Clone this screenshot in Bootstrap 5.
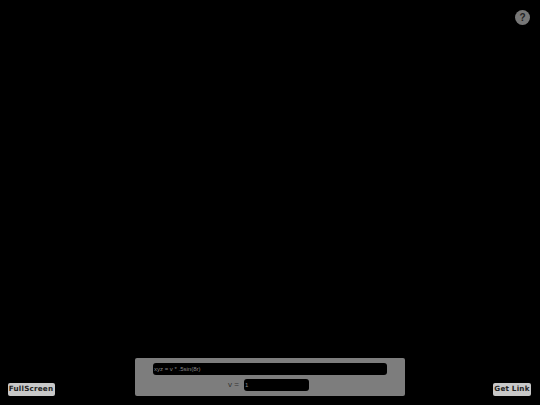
<!DOCTYPE html>
<html lang="en">
<head>
<meta charset="utf-8">
<title>Parametric surface</title>
<link rel="stylesheet" href="https://cdn.jsdelivr.net/npm/bootstrap@5.3.0/dist/css/bootstrap.min.css">
<style>
html,body{height:405px;overflow:hidden;background:#000;}
body{font-family:"Liberation Sans",Arial,sans-serif;}
.stage{height:405px;padding:9.5px 7.5px 9px 7.5px;}
.help-dot{width:15px;height:15px;border-radius:50%;background:#777;color:#222;font:bold 10px/15px "Liberation Sans",Arial,sans-serif;text-align:center;margin-right:2.5px;}
.dock{grid-template-columns:1fr 270px 1fr;align-items:end;}
.link-btn{font:bold 7.2px/12.5px "DejaVu Sans",sans-serif;letter-spacing:.2px;white-space:nowrap;height:13px;padding:0;background:#c8c8c8;color:#222;border:0;border-radius:2px;--bs-btn-hover-bg:#c8c8c8;}
.fs-btn{width:47px;}
.get-btn{width:38px;margin-right:1.5px;}
.formula-panel{background:#7d7d7d;border-radius:2px;height:38px;padding:5px 18px 5px;color:#333;}
.expr-field,.num-field{background:#000;color:#888;border:0;border-radius:3px;font:6px/11.5px "Liberation Sans",Arial,sans-serif;height:11.5px;padding:0 1px;outline:0;display:block;}
.expr-field{width:234px;}
.num-field{width:65px;}
.var-row{margin-top:4.5px;margin-right:3px;}
.var-name{font:8px/11px "Liberation Sans",Arial,sans-serif;width:16px;color:#333;}
</style>
</head>
<body>
<div class="stage d-flex flex-column justify-content-between">
  <div class="d-flex justify-content-end">
    <div class="help-dot">?</div>
  </div>
  <div class="dock d-grid">
    <div class="d-flex justify-content-start"><button type="button" class="btn link-btn fs-btn">FullScreen</button></div>
    <div class="formula-panel">
      <input class="expr-field" type="text" value="xyz = v * .5sin(8r)" aria-label="Expression">
      <div class="var-row d-flex justify-content-center align-items-center">
        <span class="var-name">v =</span>
        <input class="num-field" type="text" value="1" aria-label="v">
      </div>
    </div>
    <div class="d-flex justify-content-end"><button type="button" class="btn link-btn get-btn">Get Link</button></div>
  </div>
</div>
<script src="https://cdn.jsdelivr.net/npm/bootstrap@5.3.0/dist/js/bootstrap.bundle.min.js"></script>
</body>
</html>
